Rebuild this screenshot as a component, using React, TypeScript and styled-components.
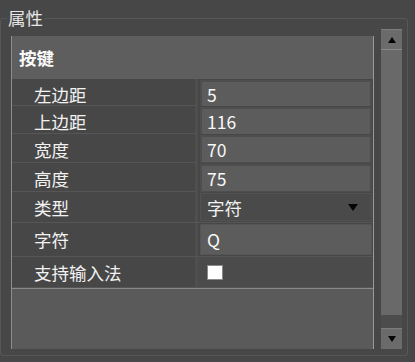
import React from 'react';
import styled, { createGlobalStyle } from 'styled-components';

const GlobalStyle = createGlobalStyle`
  html, body {
    margin: 0;
    padding: 0;
    background: #474747;
  }
  body {
    font-family: "Noto Sans CJK SC", "Noto Sans", sans-serif;
    color: #f2f2f2;
  }
`;

const Page = styled.div`
  width: 415px;
  height: 362px;
  overflow: hidden;
  box-sizing: border-box;
  padding-top: 8px;
`;

const Frame = styled.fieldset`
  margin: 0;
  padding: 0 5px 6px 10px;
  width: 408px;
  height: 348px;
  box-sizing: border-box;
  border: 1px solid #575757;
  border-radius: 3px;
  display: flex;
  align-items: stretch;
  gap: 7px;
`;

const Legend = styled.legend`
  padding: 0 1px;
  margin-left: -4px;
  font-size: 17.5px;
  line-height: 20px;
  color: #e6e6e6;
`;

const Panel = styled.div`
  width: 363px;
  margin-top: 8px;
  box-sizing: border-box;
  border-left: 1px solid #8e8e8e;
  border-right: 1px solid #9a9a9a;
  background: #5a5a5a;
  display: flex;
  flex-direction: column;
`;

const Header = styled.div`
  height: 43px;
  padding-left: 7px;
  display: flex;
  align-items: center;
  background: #5e5e5e;
  font-size: 17.5px;
  font-weight: 700;
  color: #fafafa;
`;

const Grid = styled.div`
  display: flex;
  flex-direction: column;
  border-bottom: 1px solid #8a8a8a;
`;

const Row = styled.div<{ $h: number }>`
  height: ${(p) => p.$h}px;
  display: grid;
  grid-template-columns: 186px 1fr;
  box-sizing: border-box;
  border-bottom: 1px solid #565656;
  background: #474747;
`;

const Label = styled.div`
  display: flex;
  align-items: center;
  padding-left: 22px;
  font-size: 17.5px;
  border-right: 3px solid #4f4f4f;
`;

const Cell = styled.div<{ $dark?: boolean }>`
  padding: 1px 1px 1px 2px;
  display: flex;
  background: ${(p) => (p.$dark ? '#4b4b4b' : '#474747')};
`;

const Field = styled.div<{ $thin?: boolean }>`
  flex: 1;
  display: flex;
  align-items: center;
  box-sizing: border-box;
  padding-left: ${(p) => (p.$thin ? 6 : 5)}px;
  border: ${(p) => (p.$thin ? '1px solid #555' : '2px solid #4e4e4e')};
  background: #5c5c5c;
  font-size: 17.5px;
  color: #f7f7f7;
`;

const Combo = styled.div`
  flex: 1;
  display: flex;
  align-items: center;
  justify-content: space-between;
  padding: 0 13px 0 6px;
  background: #4a4a4a;
  border: 1px solid #525252;
  font-size: 17.5px;
`;

const Arrow = styled.span<{ $up?: boolean; $w: number; $h: number }>`
  width: 0;
  height: 0;
  border-left: ${(p) => p.$w / 2}px solid transparent;
  border-right: ${(p) => p.$w / 2}px solid transparent;
  ${(p) =>
    p.$up
      ? `border-bottom: ${p.$h}px solid #050505;`
      : `border-top: ${p.$h}px solid #050505;`}
`;

const CheckCell = styled.div`
  display: flex;
  align-items: center;
  padding-left: 9px;
  background: #4b4b4b;
`;

const Check = styled.span`
  width: 16px;
  height: 15px;
  box-sizing: border-box;
  background: #ffffff;
  border: 1px solid #8a8a8a;
`;

const Scroll = styled.div`
  width: 21px;
  margin-top: 1px;
  display: flex;
  flex-direction: column;
  background: #4c4c4c;
`;

const ScrollBtn = styled.div<{ $top?: boolean }>`
  height: 21px;
  box-sizing: border-box;
  display: flex;
  align-items: center;
  justify-content: center;
  background: #6b6b6b;
  border-top: 1px solid #7c7c7c;
  ${(p) => (p.$top ? 'border-bottom: 1px solid #8a8a8a;' : '')}
`;

const Thumb = styled.div`
  height: 265px;
  background: #696969;
`;

const Spacer = styled.div`
  flex: 1;
`;

const fields = [
  { label: '左边距', value: '5', h: 27 },
  { label: '上边距', value: '116', h: 28 },
  { label: '宽度', value: '70', h: 29 },
  { label: '高度', value: '75', h: 29 },
];

export default function App() {
  return (
    <Page>
      <GlobalStyle />
      <Frame>
        <Legend>属性</Legend>
        <Panel>
          <Header>按键</Header>
          <Grid>
            {fields.map((f) => (
              <Row key={f.label} $h={f.h}>
                <Label>{f.label}</Label>
                <Cell>
                  <Field>{f.value}</Field>
                </Cell>
              </Row>
            ))}
            <Row $h={31}>
              <Label>类型</Label>
              <Cell>
                <Combo>
                  字符
                  <Arrow $w={11} $h={7} />
                </Combo>
              </Cell>
            </Row>
            <Row $h={34}>
              <Label>字符</Label>
              <Cell>
                <Field $thin>Q</Field>
              </Cell>
            </Row>
            <Row $h={31}>
              <Label>支持输入法</Label>
              <CheckCell>
                <Check />
              </CheckCell>
            </Row>
          </Grid>
        </Panel>
        <Scroll>
          <ScrollBtn $top>
            <Arrow $up $w={8} $h={6} />
          </ScrollBtn>
          <Thumb />
          <Spacer />
          <ScrollBtn>
            <Arrow $w={8} $h={6} />
          </ScrollBtn>
        </Scroll>
      </Frame>
    </Page>
  );
}
